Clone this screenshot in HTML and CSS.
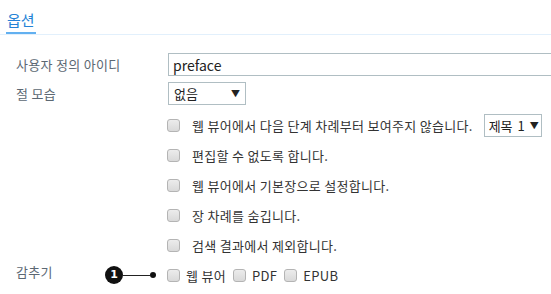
FILE: index.html
```html
<!DOCTYPE html>
<html>
<head>
    <meta charset="UTF-8" />
    <title>옵션</title>
    <link rel="stylesheet" href="styles.css">
</head>
<body>
    <div class="tabs">
        <span class="tab">옵션</span>
    </div>
    <div class="form">
        <div class="row first">
            <label class="label">사용자 정의 아이디</label>
            <div class="field wide"><input class="text" type="text" value="preface"></div>
        </div>
        <div class="row">
            <label class="label">절 모습</label>
            <div class="field">
                <span class="select small"><span>없음</span><span class="arrow">▼</span></span>
            </div>
        </div>
        <div class="checks">
            <div class="check">
                <input type="checkbox"><span class="txt">웹 뷰어에서 다음 단계 차례부터 보여주지 않습니다.</span>
                <span class="select level"><span>제목 1</span><span class="arrow">▼</span></span>
            </div>
            <div class="check"><input type="checkbox"><span class="txt">편집할 수 없도록 합니다.</span></div>
            <div class="check"><input type="checkbox"><span class="txt">웹 뷰어에서 기본장으로 설정합니다.</span></div>
            <div class="check"><input type="checkbox"><span class="txt">장 차례를 숨깁니다.</span></div>
            <div class="check"><input type="checkbox"><span class="txt">검색 결과에서 제외합니다.</span></div>
        </div>
        <div class="row hide">
            <label class="label">감추기</label>
            <div class="field inline">
                <span class="opt"><input type="checkbox">웹 뷰어</span>
                <span class="opt"><input type="checkbox">PDF</span>
                <span class="opt"><input type="checkbox">EPUB</span>
            </div>
            <span class="callout"><span class="badge">1</span><span class="wire"></span><span class="dot"></span></span>
        </div>
    </div>
</body>
</html>
```

FILE: styles.css
```css
* {
    margin: 0;
    padding: 0;
    box-sizing: border-box;
}
body {
    font-family: "Noto Sans CJK KR", sans-serif;
    font-size: 13px;
    color: #333;
    background: #fff;
    overflow: hidden;
}

.tabs {
    height: 35px;
    padding: 10px 0 0 6px;
    border-bottom: 1px solid #e2f0fc;
}
.tab {
    display: inline-block;
    height: 24px;
    padding: 0 1px;
    font-size: 15px;
    line-height: 20px;
    color: #2482d6;
    border-bottom: 2px solid #62b0f0;
}

.form {
    padding-top: 18px;
}
.row {
    display: flex;
    align-items: center;
    position: relative;
}
.row + .row {
    margin-top: 6px;
}
.label {
    flex: 0 0 168px;
    padding-left: 16px;
    color: #5c6873;
    line-height: 18px;
    letter-spacing: 0.3px;
}
.field {
    flex: 0 0 auto;
}
.field.wide {
    flex: 1 1 auto;
}
.text {
    display: block;
    width: 100%;
    height: 23px;
    border: 1px solid #b0bec3;
    border-right: none;           /* 오른쪽 끝은 화면 밖으로 이어짐 */
    padding: 0 4px;
    font: inherit;
    font-size: 14px;
    color: #222;
    outline: none;
}

.select {
    display: inline-flex;
    align-items: center;
    justify-content: space-between;
    height: 23px;
    border: 1px solid #b0bec3;
    padding: 0 5px 0 5px;
    font-size: 13px;
    color: #222;
    white-space: nowrap;
}
.select.small {
    width: 78px;
}
.select.level {
    width: 58px;
    margin-left: 11px;
    padding: 0 4px 0 4px;
    flex: 0 0 auto;
    word-spacing: 2px;
}
.select.level .arrow {
    margin-left: 5px;
}
.arrow {
    font-size: 9px;
}

.checks {
    padding: 5px 0 0 167px;
}
.check {
    display: flex;
    align-items: center;
    height: 30px;
    white-space: nowrap;
}
.txt {
    margin-left: 12px;
    letter-spacing: 0.3px;
}

input[type="checkbox"] {
    appearance: none;
    flex: 0 0 auto;
    width: 13px;
    height: 13px;
    border: 1px solid #b4b4b4;
    border-radius: 3px;
    background: linear-gradient(#ececec, #d9d9d9);
}

.row.hide {
    margin-top: 0;
    height: 30px;
}
.row.hide .label {
    margin-top: -6px;
}
.inline {
    display: flex;
    align-items: center;
    margin-left: -1px;
}
.opt {
    display: inline-flex;
    align-items: center;
    margin-right: 7px;
    letter-spacing: 0.3px;
}
.opt input {
    margin-right: 6px;
}

/* 번호 말풍선 */
.callout {
    position: absolute;
    left: 105px;
    top: 6px;
    display: flex;
    align-items: center;
}
.badge {
    width: 18px;
    height: 18px;
    border-radius: 50%;
    background: #111;
    color: #fff;
    font-family: "DejaVu Sans", sans-serif;
    font-weight: bold;
    font-size: 11px;
    line-height: 18px;
    text-align: center;
}
.wire {
    width: 27px;
    height: 1px;
    background: #222;
}
.dot {
    width: 6px;
    height: 6px;
    border-radius: 50%;
    background: #111;
}
```
